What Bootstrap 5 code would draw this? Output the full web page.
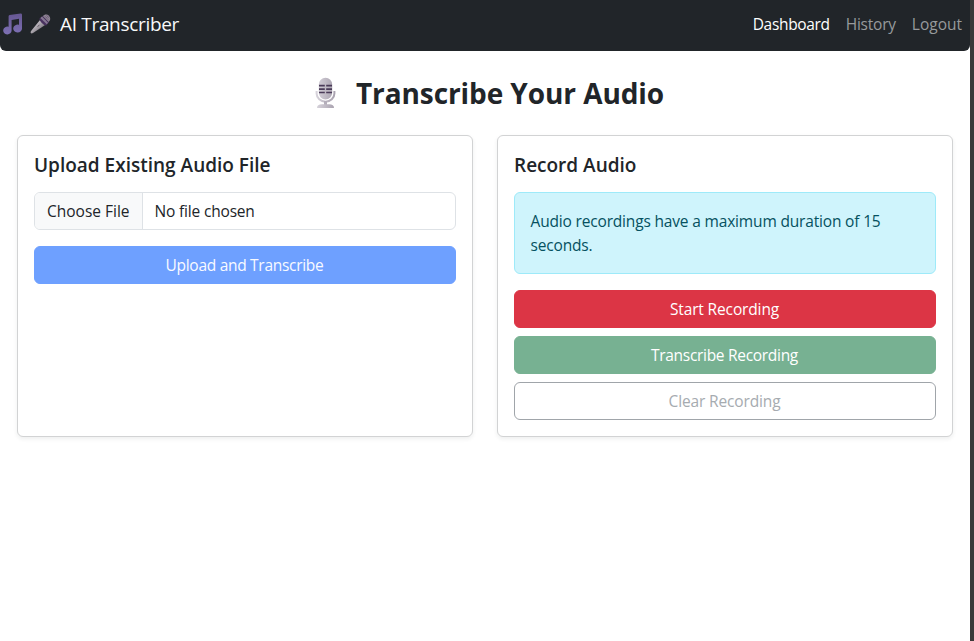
<!DOCTYPE html>
<html lang="en">
<head>
<meta charset="utf-8">
<title>AI Transcriber</title>
<link href="https://cdn.jsdelivr.net/npm/bootstrap@5.3.0/dist/css/bootstrap.min.css" rel="stylesheet">
<style>
body{font-family:"Open Sans","Noto Sans",sans-serif;background:#3b3a39;overflow:hidden;font-size:15.5px;line-height:24px;color:#212529}
.page{width:970px;height:641px;background:#fff}
.topbar{height:51px;border-radius:0 0 6px 6px;padding:0 0 3px 3px;background:#212529}
.navbar-brand{font-size:19px;letter-spacing:-.32px;line-height:30px;padding:0}
.brand-icons{gap:6px;margin-right:9px}
.topbar .nav-link{padding:8px;font-size:15.5px;color:#979a9c}
.topbar .nav-link.active{color:#fff;letter-spacing:-.33px}
.track-history{letter-spacing:-.23px}
.page-title{font-size:28px;line-height:34px;padding:25px 0 25px 9px;gap:20px;letter-spacing:-.08px}
.panels{padding:0 5px}
.panel{height:302px;border-color:#d2d3d4}
.panel .card-title{font-size:19px;font-weight:600;line-height:24px;padding-top:1px;margin-bottom:15px}
.panel .btn,.panel .form-control{height:38px;font-size:15.5px;line-height:24px}
.panel .form-control{letter-spacing:-.18px}
.panel .form-control::file-selector-button{background:#f8f9fa}
.panel .alert{line-height:24px;letter-spacing:-.17px;padding-left:15.5px;background:#cff4fc;border-color:#9eeaf9;color:#055160}
.panel .btn{padding-right:13px}
.btn.upload:disabled{background:#6ea0ff;border-color:#6ea0ff;opacity:1;letter-spacing:-.29px;color:#f8faff}
.btn.transcribe:disabled{background:#77b192;border-color:#77b192;opacity:1;letter-spacing:-.3px}
.btn.start,.btn.clear{letter-spacing:-.14px}
.btn.clear:disabled{color:#a6abb0;border-color:#a0a5aa;opacity:1}
</style>
</head>
<body>
<div class="page">
  <nav class="topbar navbar navbar-expand flex-nowrap justify-content-between" data-bs-theme="dark">
    <a class="navbar-brand d-flex align-items-center m-0" href="#">
      <span class="brand-icons d-flex align-items-center">
        <svg width="21" height="22" viewBox="0 0 21 22">
          <defs><linearGradient id="note" x1="0" y1="0" x2="0" y2="1"><stop offset="0" stop-color="#665792"/><stop offset="1" stop-color="#7d70b4"/></linearGradient></defs>
          <path fill="url(#note)" d="M5.6 3.3Q5.6 2.3 6.6 2.1L17.6.6Q19 .5 19 1.7V15.2A4.4 3.9 0 1 1 16 11.8V5.7L8.6 6.9V17.4A4.2 3.9 0 1 1 5.6 13.8Z"/>
        </svg>
        <svg width="21" height="22" viewBox="0 0 21 22">
          <defs><linearGradient id="handle" x1="0" y1="0" x2="1" y2="1"><stop offset=".3" stop-color="#c6c1c8"/><stop offset=".8" stop-color="#77717a"/></linearGradient></defs>
          <path fill="url(#handle)" d="M10 7L14.8 12.2 3 20.1Q1.2 21 .7 19.8.4 19 1.1 18.1Z"/>
          <path fill="#8f8694" d="M12.8 3.3C14.5.8 17.3.9 19 2.8 20.9 4.8 20.6 7.7 18.4 9.2Z"/>
          <path fill="#49325f" d="M9.4 5.8L12.6 2.9 19 9.2 16.2 12.4Q14.5 12.7 11.8 10 9.1 7.2 9.4 5.8Z"/>
          <path fill="#b9b2bd" d="M10.4 5L12 3.6 18 9.8 16.8 11.3Z" opacity=".55"/>
          <path stroke="#6e5c78" stroke-width=".8" d="M14.5 2.8l4.5 4.7M16.3 2l3.2 3.4M16 5.2l3.2-3.3"/>
          <path stroke="#625c66" d="M7.6 13.8l1.8-2"/>
        </svg>
      </span>AI Transcriber
    </a>
    <div class="navbar-nav">
      <a class="nav-link active" href="#">Dashboard</a>
      <a class="nav-link track-history" href="#">History</a>
      <a class="nav-link" href="#">Logout</a>
    </div>
  </nav>
  <main>
    <h1 class="page-title d-flex justify-content-center align-items-center fw-bold m-0">
      <svg width="21" height="32" viewBox="0 0 21 32">
        <defs><linearGradient id="metal" x1="0" x2="1"><stop stop-color="#d6d2da"/><stop offset="1" stop-color="#aaa3b0"/></linearGradient></defs>
        <path fill="none" stroke="url(#metal)" stroke-width="2" d="M1.6 14V16.5A8.9 8.2 0 0 0 19.4 16.5V14"/>
        <path fill="#b4aeba" d="M9 24h3v4H9z"/>
        <path fill="url(#metal)" d="M2 31Q2 27.3 7 27.3h7q5 0 5 3.7ZM3.8 7.5a6.7 6.7 0 0 1 13.4 0v8.2a6.7 6.7 0 0 1-13.4 0Z"/>
        <path stroke="#4a3b58" stroke-width="1.7" d="M4 8.7h5.8M11.2 8.7H17M4 12.1h5.8M11.2 12.1H17M4 15.5h5.8M11.2 15.5H17"/>
      </svg>
      <span>Transcribe Your Audio</span>
    </h1>
    <div class="panels">
      <div class="row g-4 m-0">
        <section class="col-6 mt-0 px-2">
          <div class="panel card shadow-sm mx-1">
            <div class="card-body">
              <h5 class="card-title">Upload Existing Audio File</h5>
              <input class="form-control mb-3" type="file" aria-label="Audio file">
              <button class="btn btn-primary upload w-100" disabled>Upload and Transcribe</button>
            </div>
          </div>
        </section>
        <section class="col-6 mt-0 px-2">
          <div class="panel card shadow-sm mx-1">
            <div class="card-body">
              <h5 class="card-title">Record Audio</h5>
              <div class="alert alert-info mb-3">Audio recordings have a maximum duration of 15 seconds.</div>
              <div class="d-grid gap-2">
                <button class="btn btn-danger start">Start Recording</button>
                <button class="btn btn-success transcribe" disabled>Transcribe Recording</button>
                <button class="btn btn-outline-secondary clear" disabled>Clear Recording</button>
              </div>
            </div>
          </div>
        </section>
      </div>
    </div>
  </main>
</div>
<script src="https://cdn.jsdelivr.net/npm/bootstrap@5.3.0/dist/js/bootstrap.bundle.min.js"></script>
</body>
</html>
